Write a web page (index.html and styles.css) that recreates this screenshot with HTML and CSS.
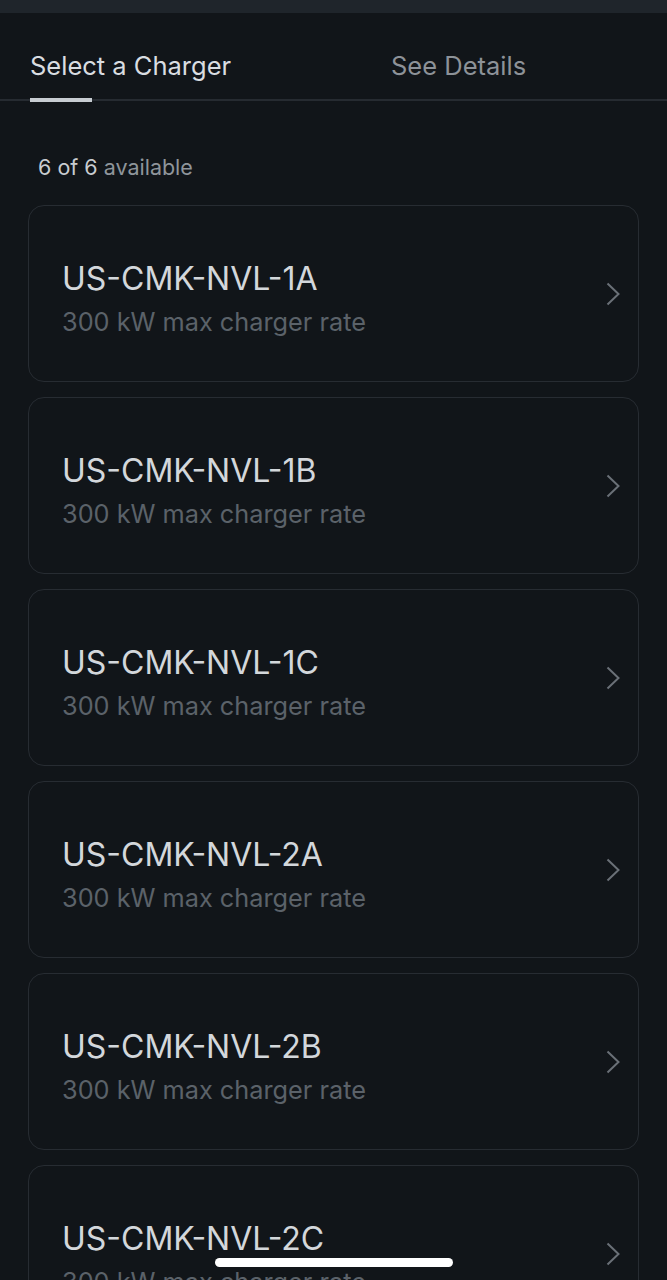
FILE: index.html
```
<!DOCTYPE html>
<html>
<head>
<meta charset="utf-8">
<link rel="stylesheet" href="styles.css">
</head>
<body>
<div class="topbar"></div>
<div class="tabs">
  <div class="tab active">Select a Charger</div>
  <div class="tab">See Details</div>
</div>
<div class="count"><span class="num">6 of 6</span> available</div>
<div class="list">
  <div class="card"><div class="info"><div class="name">US-CMK-NVL-1A</div><div class="rate">300 kW max charger rate</div></div><svg class="chev" viewBox="0 0 14 24"><path d="M1.5 1.5 L12.5 12 L1.5 22.5"/></svg></div>
  <div class="card"><div class="info"><div class="name">US-CMK-NVL-1B</div><div class="rate">300 kW max charger rate</div></div><svg class="chev" viewBox="0 0 14 24"><path d="M1.5 1.5 L12.5 12 L1.5 22.5"/></svg></div>
  <div class="card"><div class="info"><div class="name">US-CMK-NVL-1C</div><div class="rate">300 kW max charger rate</div></div><svg class="chev" viewBox="0 0 14 24"><path d="M1.5 1.5 L12.5 12 L1.5 22.5"/></svg></div>
  <div class="card"><div class="info"><div class="name">US-CMK-NVL-2A</div><div class="rate">300 kW max charger rate</div></div><svg class="chev" viewBox="0 0 14 24"><path d="M1.5 1.5 L12.5 12 L1.5 22.5"/></svg></div>
  <div class="card"><div class="info"><div class="name">US-CMK-NVL-2B</div><div class="rate">300 kW max charger rate</div></div><svg class="chev" viewBox="0 0 14 24"><path d="M1.5 1.5 L12.5 12 L1.5 22.5"/></svg></div>
  <div class="card"><div class="info"><div class="name">US-CMK-NVL-2C</div><div class="rate">300 kW max charger rate</div></div><svg class="chev" viewBox="0 0 14 24"><path d="M1.5 1.5 L12.5 12 L1.5 22.5"/></svg></div>
</div>
<div class="home"></div>
</body>
</html>
```
FILE: styles.css
```
html, body {
  margin: 0;
  padding: 0;
  background: #111519;
  font-family: Inter, "Liberation Sans", sans-serif;
  height: 1280px;
  overflow: hidden;
}
.topbar {
  height: 13px;
  background: #1f252b;
}
.tabs {
  display: flex;
  height: 88px;
  border-bottom: 2px solid #262b31;
  box-sizing: border-box;
  padding-left: 30px;
}
.tab {
  font-size: 25.5px;
  color: #8d9298;
  padding-top: 37px;
  box-sizing: border-box;
  height: 88px;
}
.tab.active {
  color: #d9dde1;
  width: 361px;
  position: relative;
}
.tab.active::after {
  content: "";
  position: absolute;
  left: 0;
  bottom: -1px;
  width: 62px;
  height: 4px;
  background: #c7ccd1;
}
.count {
  padding: 53px 0 0 38px;
  font-size: 21.5px;
  color: #8f959b;
  height: 104px;
  box-sizing: border-box;
}
.count .num { color: #c8ccd0; }
.list {
  display: flex;
  flex-direction: column;
  gap: 15px;
  padding: 0 28px;
}
.card {
  height: 177px;
  flex-shrink: 0;
  box-sizing: border-box;
  border: 1.5px solid #272c32;
  border-radius: 16px;
  display: flex;
  align-items: center;
  padding: 0 18px 0 33px;
}
.info { flex: 1; margin-top: 9px; }
.name {
  font-size: 32px;
  color: #d3d7db;
  line-height: 40px;
}
.rate {
  font-size: 25.3px;
  color: #5b6269;
  line-height: 32px;
  margin-top: 7px;
}
.chev {
  width: 14px;
  height: 24px;
  fill: none;
  stroke: #6a7077;
  stroke-width: 2;
}
.home {
  position: fixed;
  left: 215px;
  top: 1258px;
  width: 238px;
  height: 9px;
  border-radius: 5px;
  background: #ffffff;
}
```
